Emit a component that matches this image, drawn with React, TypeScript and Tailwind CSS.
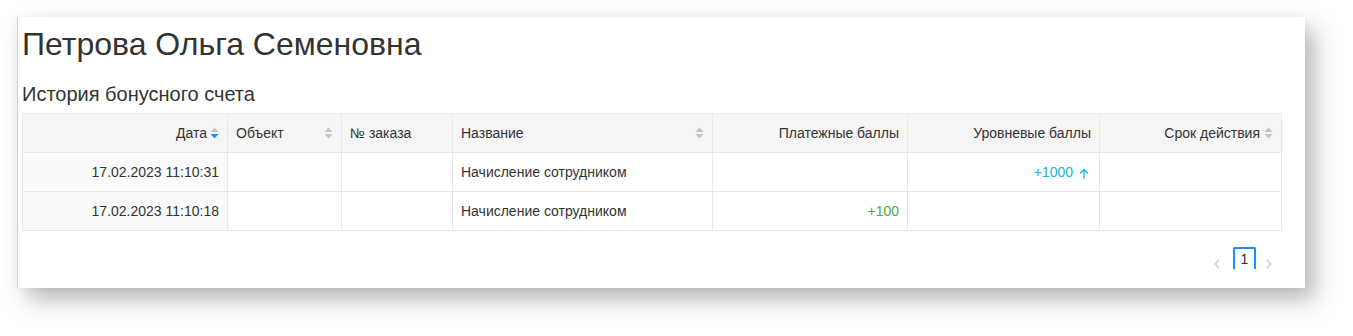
import React from 'react';

function SortIcon({ active }: { active?: 'up' | 'down' }) {
  return (
    <svg width="9" height="12" viewBox="0 0 9 12" className="shrink-0">
      <path d="M4.5 0.5 L8.5 5 H0.5 Z" fill={active === 'up' ? '#1890ff' : '#c4c4c4'} />
      <path d="M4.5 11.5 L8.5 7 H0.5 Z" fill={active === 'down' ? '#1890ff' : '#c4c4c4'} />
    </svg>
  );
}

function ArrowUp() {
  return (
    <svg width="10" height="11" viewBox="0 0 10 11" fill="none" stroke="#13b5d1" strokeWidth="1.3">
      <path d="M5 10.5V1.5M1 5.5l4-4 4 4" />
    </svg>
  );
}

function Chevron({ dir }: { dir: 'left' | 'right' }) {
  return (
    <svg width="8" height="10" viewBox="0 0 8 10" fill="none" stroke="#c8c8c8" strokeWidth="1.2">
      <path d={dir === 'left' ? 'M6 1 L2 5 L6 9' : 'M2 1 L6 5 L2 9'} />
    </svg>
  );
}

export default function App() {
  const rows = [
    { date: '17.02.2023 11:10:31', name: 'Начисление сотрудником', pay: '', level: '+1000' },
    { date: '17.02.2023 11:10:18', name: 'Начисление сотрудником', pay: '+100', level: '' },
  ];

  const th = 'h-[39px] px-2 border-r border-b border-[#e8e8e8] font-normal text-[#333]';
  const td = 'h-[39px] px-2 border-r border-b border-[#e8e8e8]';

  return (
    <div className="w-[1353px] h-[336px] bg-white pt-[17px] pl-[17px] font-['Liberation_Sans',Arial,sans-serif] text-[#333]">
      <div className="w-[1288px] h-[271px] bg-white border-l border-[#c9d3e0] shadow-[10px_12px_22px_rgba(0,0,0,0.28),0_0_10px_rgba(0,0,0,0.04)] pl-[4px] pr-[23px]">
        <h1 className="text-[32px] leading-none pt-[11px] h-[56px]">Петрова Ольга Семеновна</h1>
        <h2 className="text-[20px] leading-none pt-[11px] h-[40px]">История бонусного счета</h2>
        <table className="w-[1259px] border-collapse border-l border-t border-[#e8e8e8] text-[14px] table-fixed">
          <colgroup>
            <col className="w-[205px]" />
            <col className="w-[114px]" />
            <col className="w-[111px]" />
            <col className="w-[260px]" />
            <col className="w-[195px]" />
            <col className="w-[192px]" />
            <col className="w-[182px]" />
          </colgroup>
          <thead>
            <tr className="bg-[#f5f5f5]">
              <th className={th}>
                <div className="flex items-center justify-end gap-[3px]">
                  <span>Дата</span>
                  <SortIcon active="down" />
                </div>
              </th>
              <th className={th}>
                <div className="flex items-center justify-between">
                  <span>Объект</span>
                  <SortIcon />
                </div>
              </th>
              <th className={th + ' text-left'}>№ заказа</th>
              <th className={th}>
                <div className="flex items-center justify-between">
                  <span>Название</span>
                  <SortIcon />
                </div>
              </th>
              <th className={th + ' text-right'}>Платежные баллы</th>
              <th className={th + ' text-right'}>Уровневые баллы</th>
              <th className={th}>
                <div className="flex items-center justify-end gap-[4px]">
                  <span>Срок действия</span>
                  <SortIcon />
                </div>
              </th>
            </tr>
          </thead>
          <tbody>
            {rows.map((r) => (
              <tr key={r.date}>
                <td className={td + ' bg-[#fafafa] text-right'}>{r.date}</td>
                <td className={td}></td>
                <td className={td}></td>
                <td className={td}>{r.name}</td>
                <td className={td + ' text-right text-[#52a83a]'}>{r.pay}</td>
                <td className={td + ' text-right text-[#13b5d1]'}>
                  {r.level && (
                    <span className="inline-flex items-center gap-[6px] mr-[2px]">
                      {r.level}
                      <span className="pt-[3px]">
                        <ArrowUp />
                      </span>
                    </span>
                  )}
                </td>
                <td className={td}></td>
              </tr>
            ))}
          </tbody>
        </table>
        <div className="flex justify-end items-start pt-[16px] pr-[9px] gap-[9px]">
          <span className="mt-[12px] mr-[3px]">
            <Chevron dir="left" />
          </span>
          <div className="w-[23px] h-[22px] border-t-2 border-x-2 border-[#1890ff] rounded-t-[2px] text-[14px] text-center leading-[20px] text-[#333]">
            1
          </div>
          <span className="mt-[12px]">
            <Chevron dir="right" />
          </span>
        </div>
      </div>
    </div>
  );
}
